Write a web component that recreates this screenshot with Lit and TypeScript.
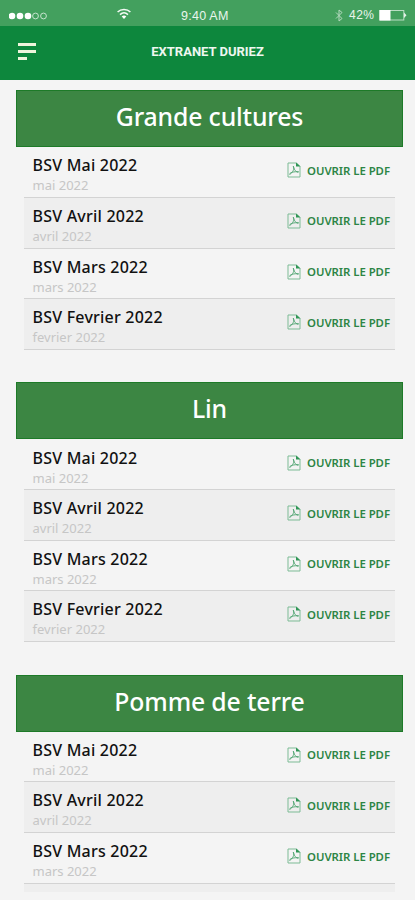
import { LitElement, html, css, svg } from "lit";
import { customElement, property } from "lit/decorators.js";

const MONTHS = ["Mai", "Avril", "Mars", "Fevrier"];
const SECTIONS = [
  { heading: "Grande cultures", months: MONTHS, peek: false },
  { heading: "Lin", months: MONTHS, peek: false },
  { heading: "Pomme de terre", months: MONTHS.slice(0, 3), peek: true },
];

@customElement("status-bar")
class StatusBar extends LitElement {
  static styles = css`
    :host { display: grid; grid-template-columns: 181px 1fr 80px; height: 26px; background: #43a05e; color: #e9f5ec;
      font: 12px/30px "Liberation Sans", Arial, sans-serif; white-space: nowrap; }
    .left, .right { display: flex; }
    .dots { margin: 11px 0 0 9px; }
    .wifi { margin: 8px 0 0 70px; }
    .time { font-size: 12.500px; line-height: 32px; letter-spacing: .25px; }
    .bt { margin: 9px 6px 0 0; }
    .battery { margin: 9px 0 0 4px; }
    .charge { letter-spacing: .5px; }
    svg { display: block; flex: none; }
  `;
  render() {
    return html`
      <div class="left">
        <svg class="dots" width="38" height="10" viewBox="0 0 38 10">
          ${[3, 11, 19, 26.5, 34.5].map((x, i) => svg`<circle cx=${x} cy="5" r=${i < 3 ? 3.3 : 2.9}
            fill=${i < 3 ? "#fff" : "none"} stroke=${i < 3 ? "none" : "#d4ead9"} stroke-width=".9"/>`)}
        </svg>
        <svg class="wifi" width="14" height="12" viewBox="0 0 14 12" fill="none" stroke="#f4faf5" stroke-width="1.5">
          <path d="M.6 4C4 .5 10 .5 13.4 4M3 6.6c2.400-2.200 5.600-2.200 8 0"/>
          <path d="M4.700 8.400c1.500-1.200 3.100-1.200 4.600 0L7 11z" fill="#fff" stroke="none"/>
        </svg>
      </div>
      <span class="time">9:40 AM</span>
      <div class="right">
        <svg class="bt" width="8" height="13" viewBox="0 0 8 13" fill="none" stroke="#b5dabf" stroke-width="1">
          <path d="M1 3.500l6 6-3 2.500V1l3 2.500-6 6"/>
        </svg>
        <span class="charge">42%</span>
        <svg class="battery" width="29" height="13" viewBox="0 0 29 13">
          <rect x=".8" y="1.500" width="24" height="9.500" fill="none" stroke="#b9ddc3"/>
          <rect x=".5" y="1" width="11" height="10.500" fill="#fff"/>
          <path d="M25 3.500l2.500 2.700L25 9z" fill="#e4f3e8"/>
        </svg>
      </div>`;
  }
}

@customElement("nav-bar")
class NavBar extends LitElement {
  static styles = css`
    :host { display: grid; grid-template-columns: 60px 1fr 60px; height: 54px; background: #0d873d; }
    .menu { margin: 17px 0 0 18px; display: block; }
    .title { text-align: center; color: #eef7f0; font: 700 13px/51px Roboto, sans-serif; white-space: nowrap; }
  `;
  render() {
    return html`
      <svg class="menu" width="19" height="18" viewBox="0 0 19 18" fill="#eef5dc">
        <rect y="0" width="18" height="3"/><rect y="7" width="18" height="3"/><rect y="14" width="9" height="3"/>
      </svg>
      <span class="title">EXTRANET DURIEZ</span>`;
  }
}

@customElement("bulletin-section")
class BulletinSection extends LitElement {
  @property() heading = "";
  @property({ attribute: false }) months: string[] = [];
  @property({ type: Boolean }) peek = false;
  static styles = css`
    :host { display: block; height: 292.250px; font-family: "Noto Sans", sans-serif; }
    .heading { height: 57px; box-sizing: border-box; background: #3c8643; border: 1px solid #1d7a28; color: #fff;
      text-align: center; font-size: 24.800px; line-height: 50px; font-weight: 500; letter-spacing: -.15px; margin: 0; }
    .rows { margin: 0 8px; padding-top: .4px; }
    .row { height: 50.600px; box-sizing: border-box; display: flex; justify-content: space-between;
      border-bottom: 1.500px solid #d3d3d3; padding: 7px 5px 0 8.500px; background: #f4f4f4; }
    .row:nth-child(even) { background: #eeeeee; }
    .name { font-size: 16px; line-height: 23px; letter-spacing: .22px; font-weight: 500; color: #111; white-space: nowrap; }
    .date { font-size: 13px; line-height: 17px; color: #c6c6c6; }
    .open { display: flex; height: 32px; align-items: center; gap: 6px; color: #2d8545;
      font-size: 11.400px; font-weight: 600; letter-spacing: -.04px; white-space: nowrap; }
  `;
  render() {
    return html`
      <h2 class="heading">${this.heading}</h2>
      <div class="rows">
        ${this.months.map((m) => html`
          <div class="row">
            <div>
              <div class="name">BSV ${m} 2022</div>
              <div class="date">${m.toLowerCase()} 2022</div>
            </div>
            <div class="open">
              <svg width="14" height="16" viewBox="0 0 14 16" fill="none" stroke="#7dbb95">
                <path d="M1 1h8.500L13 4.500V15H1z"/>
                <path d="M9 .5v4h4.500z" fill="#2f9555" stroke="none"/>
                <path d="M6.300 4.200c1.500 2.500-.6 6.500-3.600 8.200-.7-1.500 4-3 8.800-2.700.3 1.700-4.200-.2-5.200-5.500z" stroke="#4aa16c" stroke-width=".9"/>
              </svg>
              <span>OUVRIR LE PDF</span>
            </div>
          </div>`)}
        ${this.peek ? html`<div class="row"></div>` : ""}
      </div>`;
  }
}

@customElement("app-root")
class AppRoot extends LitElement {
  static styles = css`
    :host { display: block; height: 900px; overflow: hidden; background: #f4f4f4; }
    .content { height: 802px; overflow: hidden; padding: 10px 12px 0 16px; }
  `;
  render() {
    return html`
      <status-bar></status-bar>
      <nav-bar></nav-bar>
      <main class="content">
        ${SECTIONS.map((s) => html`<bulletin-section .heading=${s.heading} .months=${s.months} .peek=${s.peek}></bulletin-section>`)}
      </main>`;
  }
}
